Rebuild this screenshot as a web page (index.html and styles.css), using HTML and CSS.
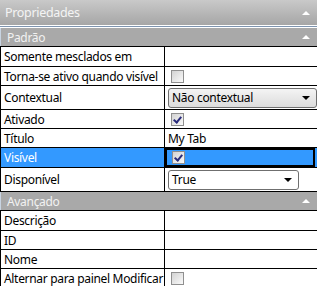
FILE: index.html
```html
<!DOCTYPE html>
<html lang="pt">
<head>
    <meta charset="UTF-8">
    <title>Propriedades</title>
    <link rel="stylesheet" href="styles.css">
</head>
<body>

    <div class="panel">
        <div class="titlebar">
            <span>Propriedades</span>
            <span class="arrow"></span>
        </div>

        <div class="section">
            <span>Padrão</span>
            <span class="arrow"></span>
        </div>

        <div class="row first">
            <div class="name">Somente mesclados em</div>
            <div class="value"></div>
        </div>
        <div class="row">
            <div class="name">Torna-se ativo quando visível</div>
            <div class="value"><span class="check"></span></div>
        </div>
        <div class="row tall">
            <div class="name">Contextual</div>
            <div class="value">
                <div class="combo wide">Não contextual<span class="drop"></span></div>
            </div>
        </div>
        <div class="row">
            <div class="name">Ativado</div>
            <div class="value"><span class="check on"></span></div>
        </div>
        <div class="row">
            <div class="name">Título</div>
            <div class="value text">My Tab</div>
        </div>
        <div class="row selected">
            <div class="name">Visível</div>
            <div class="value"><span class="check on"></span></div>
        </div>
        <div class="row tall">
            <div class="name">Disponível</div>
            <div class="value">
                <div class="combo plain">True<span class="drop"></span></div>
            </div>
        </div>

        <div class="section">
            <span>Avançado</span>
            <span class="arrow"></span>
        </div>

        <div class="row first">
            <div class="name">Descrição</div>
            <div class="value"></div>
        </div>
        <div class="row">
            <div class="name">ID</div>
            <div class="value"></div>
        </div>
        <div class="row">
            <div class="name">Nome</div>
            <div class="value"></div>
        </div>
        <div class="row">
            <div class="name">Alternar para painel Modificar</div>
            <div class="value"><span class="check"></span></div>
        </div>
    </div>

</body>
</html>
```

FILE: styles.css
```css
body {
    margin: 0;
    background-color: #ffffff;
    font-family: "Noto Sans", "Open Sans", sans-serif;
    font-size: 12px;
    letter-spacing: -0.32px;
    color: #000;
}

.panel {
    width: 317px;
}

.titlebar {
    height: 25px;
    display: flex;
    align-items: center;
    justify-content: space-between;
    padding: 0 7px 0 5px;
    background: linear-gradient(#c9c9c9, #a6a6a6);
    color: #f4f4f4;
    font-size: 12.5px;
    border-bottom: 1px solid #ffffff;
    box-shadow: 0 1px 0 #7f95b0;
    margin-bottom: 2px;
}

.section {
    height: 18px;
    display: flex;
    align-items: center;
    justify-content: space-between;
    padding: 0 7px 0 6px;
    background-color: #a9a9a9;
    color: #f2f2f2;
    border-left: 1px solid #c8d4e2;
}

.arrow {
    width: 0;
    height: 0;
    border-left: 4px solid transparent;
    border-right: 4px solid transparent;
    border-bottom: 4px solid #ffffff;
}

.row {
    display: grid;
    grid-template-columns: 164px 1fr;
    height: 18px;
    border-bottom: 1px solid #000;
    border-left: 1px solid #000;
}

.row.first {
    border-top: 1px solid #000;
    height: 19px;
}

.row.tall {
    height: 23px;
}

.name {
    border-right: 1px solid #000;
    padding-left: 3px;
    display: flex;
    align-items: center;
    white-space: nowrap;
    overflow: hidden;
}

.value {
    display: flex;
    align-items: center;
    padding-left: 6px;
}

.value.text {
    padding-left: 3px;
}

.row.selected {
    background-color: #3399ff;
    height: 19px;
}

.row.selected .name {
    color: #ffffff;
}

.row.selected .value {
    border: 2px solid #000;
    padding-left: 5px;
    margin-right: 2px;
}

.check {
    width: 11px;
    height: 11px;
    border: 1px solid #8f8f8f;
    background: linear-gradient(135deg, #d2d2d2, #fafafa);
    position: relative;
}

.check.on::after {
    content: "";
    position: absolute;
    left: 3px;
    top: 1px;
    width: 3px;
    height: 6px;
    border-right: 2px solid #2a2c7c;
    border-bottom: 2px solid #2a2c7c;
    transform: rotate(40deg);
}

.combo {
    height: 20px;
    box-sizing: border-box;
    border: 1px solid #6f6f6f;
    border-radius: 3px;
    display: flex;
    align-items: center;
    justify-content: space-between;
    padding: 0 6px 0 3px;
    margin-left: -3px;
}

.combo.wide {
    width: 149px;
    background: linear-gradient(#f4f4f4, #dcdcdc);
}

.combo.plain {
    width: 131px;
    background-color: #ffffff;
}

.drop {
    width: 0;
    height: 0;
    border-left: 4px solid transparent;
    border-right: 4px solid transparent;
    border-top: 4px solid #000;
}
```
